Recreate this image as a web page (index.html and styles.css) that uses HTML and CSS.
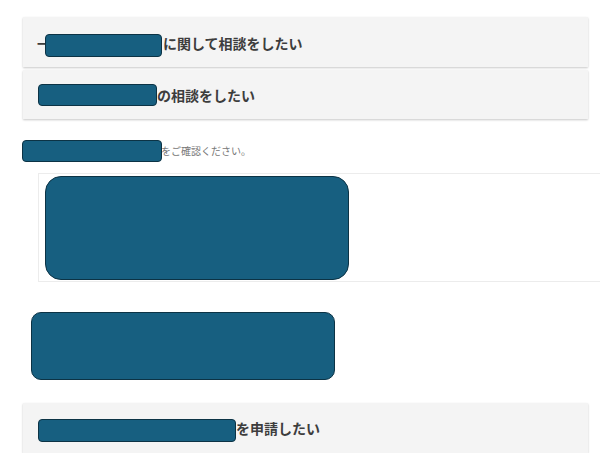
FILE: index.html
```html
<!DOCTYPE html>
<html lang="ja">
<head>
<meta charset="utf-8">
<title>相談</title>
<link rel="stylesheet" href="styles.css">
</head>
<body>
<div class="page">
  <div class="card card-first">
    <span class="lead">一</span><span class="redact r1"></span><span class="label">に関して相談をしたい</span>
  </div>
  <div class="card card-second">
    <span class="redact r2"></span><span class="label">の相談をしたい</span>
  </div>
  <div class="section">
    <p class="notice"><span class="redact r3"></span><span class="notice-text">をご確認ください。</span></p>
    <div class="box">
      <div class="redact r4"></div>
    </div>
    <div class="redact r5"></div>
  </div>
  <div class="card card-third">
    <span class="redact r6"></span><span class="label">を申請したい</span>
  </div>
</div>
</body>
</html>
```

FILE: styles.css
```css
html, body {
  margin: 0;
  padding: 0;
  background: #ffffff;
  overflow: hidden;
}
body {
  font-family: "Noto Sans CJK JP", "Noto Sans", sans-serif;
  color: #333333;
}
.page {
  padding: 17px 0 0 23px;
  width: 565px;
}
.card {
  box-sizing: border-box;
  height: 50px;
  background: #f4f4f4;
  box-shadow: 0 1px 2px rgba(0, 0, 0, 0.22);
  display: flex;
  align-items: center;
  padding-left: 15px;
}
.card-first {
  padding-left: 14px;
  padding-top: 2px;
}
.card-second {
  margin-top: 3px;
  height: 49px;
}
.card-third {
  margin-top: 23px;
}
.label {
  font-size: 14px;
  font-weight: 700;
  color: #3d3d3d;
  line-height: 20px;
}
.lead {
  font-size: 14px;
  font-weight: 700;
  color: #3d3d3d;
  line-height: 20px;
  margin-right: -6px;
}
.redact {
  box-sizing: border-box;
  display: inline-block;
  position: relative;
  background: #175f80;
  border: 1px solid #0c3345;
  border-radius: 4px;
  flex: none;
}
.r1 { width: 117px; height: 23px; margin-top: 5px; margin-right: 1px; }
.r2 { width: 119px; height: 22px; margin-top: 1px; }
.r6 { width: 198px; height: 23px; margin-top: 5px; }
.section {
  padding-top: 21px;
}
.notice {
  margin: 0 0 0 -1px;
  display: flex;
  align-items: center;
}
.r3 { width: 140px; height: 22px; }
.notice-text {
  font-size: 10px;
  color: #777777;
  line-height: 14px;
  margin-left: -1px;
}
.box {
  box-sizing: border-box;
  margin: 11px -20px 0 15px;
  height: 109px;
  border: 1px solid #ececec;
  padding: 2px 0 0 6px;
}
.r4 {
  display: block;
  width: 304px;
  height: 104px;
  border-radius: 16px;
}
.r5 {
  display: block;
  margin: 30px 0 0 8px;
  width: 304px;
  height: 68px;
  border-radius: 10px;
}
```
